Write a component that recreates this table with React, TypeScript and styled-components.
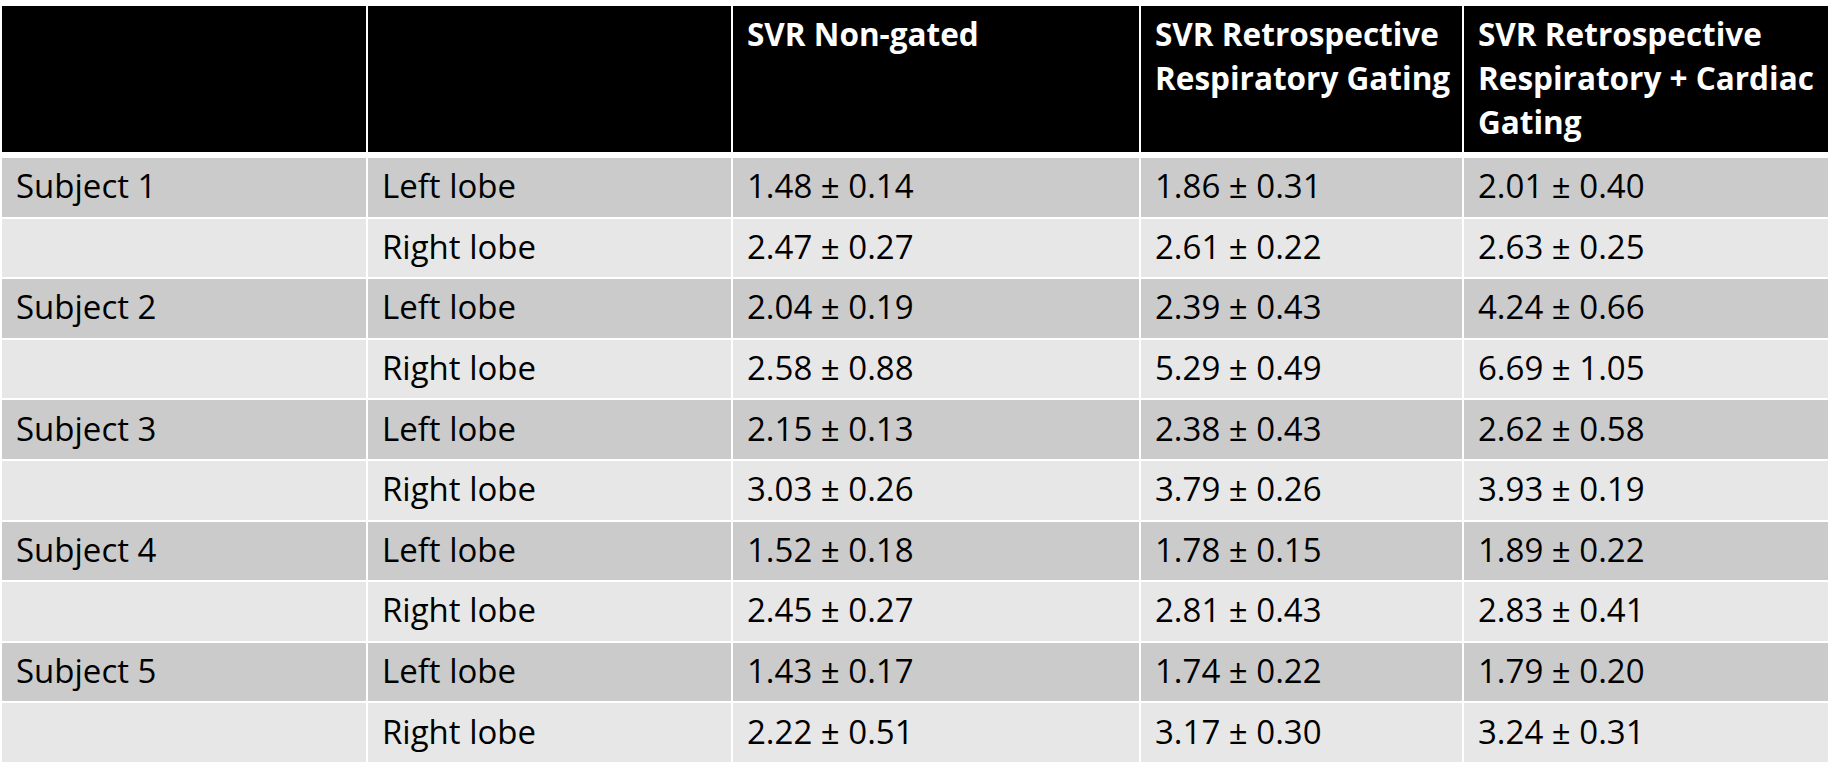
import React from "react";
import styled, { createGlobalStyle } from "styled-components";

const Global = createGlobalStyle`
  html, body { margin: 0; padding: 0; background: #ffffff; }
  body { font-family: "Open Sans", "Noto Sans", "Liberation Sans", sans-serif; }
`;

const COLS = "364px 363px 406px 321px 364px";

const Table = styled.div`
  display: flex;
  flex-direction: column;
  width: 1826px;
  margin: 6px 0 0 2px;
`;

const HeaderRow = styled.div`
  display: grid;
  grid-template-columns: ${COLS};
  column-gap: 2px;
  height: 146px;
  margin-bottom: 6px;
`;

const Body = styled.div`
  display: flex;
  flex-direction: column;
  gap: 2px;
`;

const Row = styled.div<{ $shade: "dark" | "light" }>`
  display: grid;
  grid-template-columns: ${COLS};
  column-gap: 2px;
  height: 58.6px;
  background: #ffffff;
  & > div {
    background: ${(p) => (p.$shade === "dark" ? "#cbcbcb" : "#e7e7e7")};
  }
`;

const HeadCell = styled.div`
  background: #000000;
  color: #ffffff;
  font-weight: 700;
  font-size: 31.5px;
  line-height: 44px;
  padding: 6px 14px 0 14px;
  white-space: nowrap;
  overflow: hidden;
`;

const Cell = styled.div`
  display: flex;
  align-items: center;
  color: #000000;
  font-size: 33px;
  line-height: 40px;
  padding: 0 14px 2px 14px;
  white-space: nowrap;
`;

type Data = { subject: string; lobe: string; a: string; b: string; c: string };

const rows: Data[] = [
  { subject: "Subject 1", lobe: "Left lobe", a: "1.48 ± 0.14", b: "1.86 ± 0.31", c: "2.01 ± 0.40" },
  { subject: "", lobe: "Right lobe", a: "2.47 ± 0.27", b: "2.61 ± 0.22", c: "2.63 ± 0.25" },
  { subject: "Subject 2", lobe: "Left lobe", a: "2.04 ± 0.19", b: "2.39 ± 0.43", c: "4.24 ± 0.66" },
  { subject: "", lobe: "Right lobe", a: "2.58 ± 0.88", b: "5.29 ± 0.49", c: "6.69 ± 1.05" },
  { subject: "Subject 3", lobe: "Left lobe", a: "2.15 ± 0.13", b: "2.38 ± 0.43", c: "2.62 ± 0.58" },
  { subject: "", lobe: "Right lobe", a: "3.03 ± 0.26", b: "3.79 ± 0.26", c: "3.93 ± 0.19" },
  { subject: "Subject 4", lobe: "Left lobe", a: "1.52 ± 0.18", b: "1.78 ± 0.15", c: "1.89 ± 0.22" },
  { subject: "", lobe: "Right lobe", a: "2.45 ± 0.27", b: "2.81 ± 0.43", c: "2.83 ± 0.41" },
  { subject: "Subject 5", lobe: "Left lobe", a: "1.43 ± 0.17", b: "1.74 ± 0.22", c: "1.79 ± 0.20" },
  { subject: "", lobe: "Right lobe", a: "2.22 ± 0.51", b: "3.17 ± 0.30", c: "3.24 ± 0.31" },
];

export default function App() {
  return (
    <>
      <Global />
      <Table>
        <HeaderRow>
          <HeadCell />
          <HeadCell />
          <HeadCell>SVR Non-gated</HeadCell>
          <HeadCell>
            SVR Retrospective
            <br />
            Respiratory Gating
          </HeadCell>
          <HeadCell>
            SVR Retrospective
            <br />
            Respiratory + Cardiac
            <br />
            Gating
          </HeadCell>
        </HeaderRow>
        <Body>
          {rows.map((r, i) => (
            <Row key={i} $shade={i % 2 === 0 ? "dark" : "light"}>
              <Cell>{r.subject}</Cell>
              <Cell>{r.lobe}</Cell>
              <Cell>{r.a}</Cell>
              <Cell>{r.b}</Cell>
              <Cell>{r.c}</Cell>
            </Row>
          ))}
        </Body>
      </Table>
    </>
  );
}
